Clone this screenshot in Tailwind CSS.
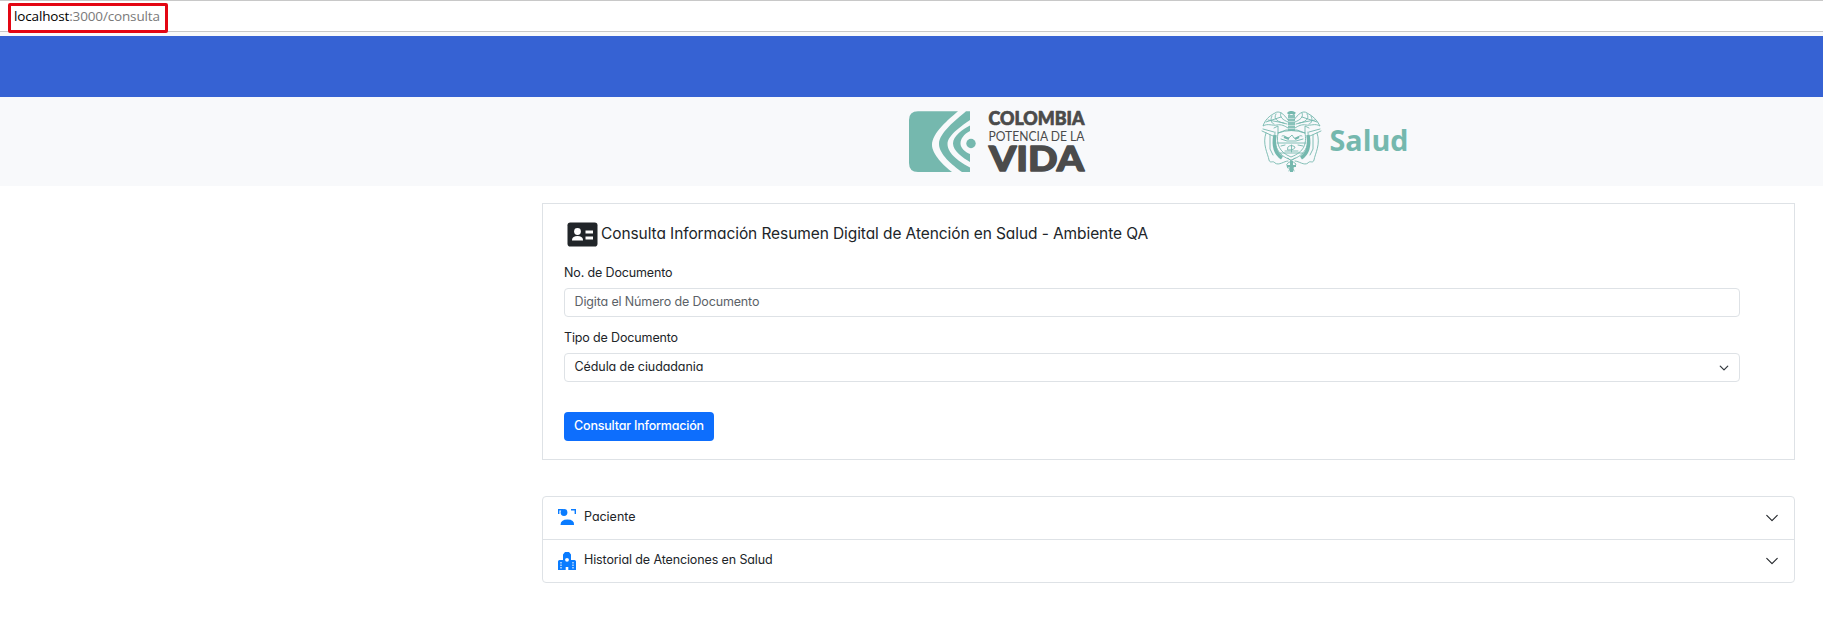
<!DOCTYPE html>
<html lang="es">
<head>
<meta charset="utf-8">
<title>Consulta</title>
<script src="https://cdn.jsdelivr.net/npm/@tailwindcss/browser@4"></script>
</head>
<body class="h-[625px] overflow-hidden bg-white font-[Inter,sans-serif] text-[12.5px] tracking-[-0.14px] text-[#212529] [font-feature-settings:'cv11']">
<div class="flex h-8 items-start border-y border-[#c8c8c8] pl-2 pt-[2px]">
  <div class="z-10 flex h-[30px] w-[160px] shrink-0 items-center rounded-[2px] border-[3px] border-[#e30613] bg-white pb-[3px] pl-[3px] font-['Open_Sans',sans-serif] text-[13.5px] tracking-[-0.15px] text-[#7a7a7a]"><span class="text-black">localhost</span>:3000/consulta</div>
</div>
<div class="h-1 bg-[#f8f9fa]"></div>
<div class="h-[61px] bg-[#3662d3]"></div>
<header class="flex h-[89px] items-start bg-[#f8f9fb] pl-[909px] pt-[14px]">
  <svg class="shrink-0 overflow-visible" width="178" height="62" viewBox="0 0 178 62">
    <g fill="#75b8ae">
      <path d="M9 .3H49C40 8 23 22 23 34C23 43 35 55 43 61H9Q0 61 0 52V9Q0 .3 9 .3Z"/>
      <path d="M57 .3H61V9C54 14 38.500 24 38.500 33C38.500 43 52 52 61 56.500V61H53C43 54 30 43 30 33C30 22 47 9 57 .3Z"/>
      <path d="M61 14.500V20C55 23 51.500 28 51.500 32.500C51.500 37 56 41 61 43V51C54 47 44 40 44 32.500C44 25 54 18 61 14.500Z"/>
      <circle cx="62" cy="32.500" r="4.700"/>
    </g>
    <g fill="#4b4b4b" font-family="Lato, sans-serif" letter-spacing="0">
      <text x="79.500" y="14" font-size="18" font-weight="900" stroke="#4b4b4b" stroke-width=".7" stroke-linejoin="round" textLength="96" lengthAdjust="spacingAndGlyphs">COLOMBIA</text>
      <text x="79.500" y="29.500" font-size="12.500" textLength="96" lengthAdjust="spacingAndGlyphs">POTENCIA DE LA</text>
      <text x="80" y="60.300" font-size="35" font-weight="900" stroke="#4b4b4b" stroke-width="1.400" stroke-linejoin="round" textLength="95" lengthAdjust="spacingAndGlyphs">VIDA</text>
    </g>
  </svg>
  <svg class="ml-[174px] shrink-0" width="150" height="64" viewBox="0 0 150 64">
    <g fill="none" stroke="#75b8ae" stroke-width=".9" stroke-linecap="round" stroke-linejoin="round">
      <path d="M27 9C23 3 18 -1 14 2C8 5 4 9 2 15C7 12 11 15 16 14C20 13 24 15 27 17M33 9C37 3 42 -1 46 2C52 5 56 9 59 15C54 12 50 15 45 14C41 13 37 15 34 17"/>
      <path d="M15 3C12 8 16 11 26 13M11 5C9 9 10 12 13 13M20 2C18 6 22 9 27 11M46 3C49 8 45 11 35 13M50 5C52 9 51 12 48 13M41 2C43 6 39 9 34 11M5 11L20 6M56 11L41 6M7 9L23 12M54 9L38 12"/>
      <path d="M13 17L17 15V22L25 19H36L44 22V15L48 17M14 21C13 35 16 44 30 49C45 44 48 35 47 21M17 22C15 33 18 41 30 46C43 41 46 33 44 22M16 32H45M19 42H42M17 22Q30 17 44 22"/>
      <path d="M1 20L12 25M2 18L13 21M60 20L49 25M59 18L48 21M5 22C1 33 7 43 8 49C9 53 12 49 14 52C18 55 23 50 27 50M56 22C60 33 54 43 53 49C52 53 49 49 47 52C43 55 38 50 34 50M9 24V38L12 44M52 24V38L49 44"/>
      <path d="M21 25C24 23 26 29 29 26L31 24L33 27C36 29 38 23 41 25M20 28L26 30H35L42 28M30.500 34V41M27 36Q30 33 34 36Q34 39 27 39ZM24 40H37M20 35L24 34M37 34L42 35"/>
      <path d="M27 47L30 50L34 47M26 53Q30 48 35 53Q34 58 27 57ZM28 60L30.500 52L33 60"/>
    </g>
    <g fill="none" stroke="#75b8ae">
      <path stroke-width="3.500" d="M14 24C12 35 15 43 21 47M47 24C49 35 46 43 40 47"/>
      <path stroke-width="7" stroke-dasharray="3 .5" stroke-opacity=".85" d="M30.500 4V20"/>
      <path stroke-width="3" d="M27 3Q30 0 34 3M30.500 50V61"/>
      <path stroke-width="2" d="M23 26L28 28M38 26L34 28M26 55H35"/>
    </g>
    <text x="68.500" y="40" fill="#75b8ae" font-family="'Open Sans', sans-serif" font-weight="700" font-size="29" letter-spacing="0" textLength="79" lengthAdjust="spacingAndGlyphs">Salud</text>
  </svg>
</header>
<main class="ml-[542px] mt-[17px] w-[1253px]">
  <section class="h-[257px] border border-[#dee2e6] pl-[21px] pt-4">
    <h1 class="flex h-[27px] items-center pl-[3px] text-[15.5px] tracking-[-0.09px]">
      <svg class="mr-[3px] mt-[2px] shrink-0" width="31" height="25" viewBox="0 0 31 25"><rect x=".5" y=".5" width="30" height="24" rx="2.800" fill="#212529"/><g fill="#fff"><circle cx="10.500" cy="9.500" r="3.400"/><path d="M5 18.500V17.500Q5.500 14 10.500 14T16 17.500V18.500Z"/><path d="M18.500 8.500H26V11.500H18.500ZM18.500 14.500H26V17.500H18.500Z"/></g></svg>
      Consulta Información Resumen Digital de Atención en Salud - Ambiente QA
    </h1>
    <form class="w-[1176px]">
      <label class="mt-4 block h-5 leading-5">No. de Documento</label>
      <div class="mt-[5px] flex h-[29px] items-center rounded border border-[#dee2e6] pb-px pl-[9.5px] text-[#5c6268]">Digita el Número de Documento</div>
      <label class="mt-[11px] block h-5 leading-5">Tipo de Documento</label>
      <div class="mt-[5px] flex h-[29px] items-center justify-between rounded border border-[#dee2e6] pb-px pl-[9.5px] pr-[10px] tracking-[-0.08px]">Cédula de ciudadania
        <svg class="mt-px" width="10" height="10" viewBox="0 0 16 16" fill="none" stroke="#343a40" stroke-width="2" stroke-linecap="round" stroke-linejoin="round"><path d="m2 5 6 6 6-6"/></svg>
      </div>
      <button type="button" class="mt-[30px] flex h-[29px] w-[150px] items-center justify-center rounded bg-[#0d6efd] pb-px font-medium tracking-[-0.2px] text-white">Consultar Información</button>
    </form>
  </section>
  <section class="mt-[36px] rounded border border-[#dee2e6]">
    <div class="flex h-[42px] items-center pb-px pl-[15px] pr-[15px]">
      <svg class="-mt-px" width="18" height="18" viewBox="0 0 18 18" fill="#0a7cff"><circle cx="6" cy="4.500" r="3.400"/><path d="M2.500 17Q2.500 11.500 9.500 11.500T16 17Z"/><path d="M.7 6V1.700H5M13 1.700H17.300V6" fill="none" stroke="#0a7cff" stroke-width="1.400"/></svg>
      <span class="-mt-px ml-[8px] tracking-[-0.03px]">Paciente</span>
      <svg class="ml-auto" width="14" height="14" viewBox="0 0 16 16" fill="none" stroke="#212529" stroke-width="1.300" stroke-linecap="round" stroke-linejoin="round"><path d="m2 5 6 6 6-6"/></svg>
    </div>
    <div class="flex h-[43px] items-center border-t border-[#dee2e6] pb-px pl-[15px] pr-[15px]">
      <svg width="18" height="18" viewBox="0 0 18 18"><path fill="#0a7cff" d="M5 8V2.500L7 0H11L13 2.500V8H16.500Q18 8 18 9.500V18H10.300V15H7.700V18H0V9.500Q0 8 1.500 8Z"/><circle cx="9" cy="7.800" r="1.900" fill="#fff"/><path d="M3 10V16.500M15 10V16.500" stroke="#d7eaff" stroke-width="1.300" stroke-dasharray="1.500 1"/></svg>
      <span class="-mt-px ml-[8px] tracking-[-0.12px]">Historial de Atenciones en Salud</span>
      <svg class="ml-auto" width="14" height="14" viewBox="0 0 16 16" fill="none" stroke="#212529" stroke-width="1.300" stroke-linecap="round" stroke-linejoin="round"><path d="m2 5 6 6 6-6"/></svg>
    </div>
  </section>
</main>
</body>
</html>
